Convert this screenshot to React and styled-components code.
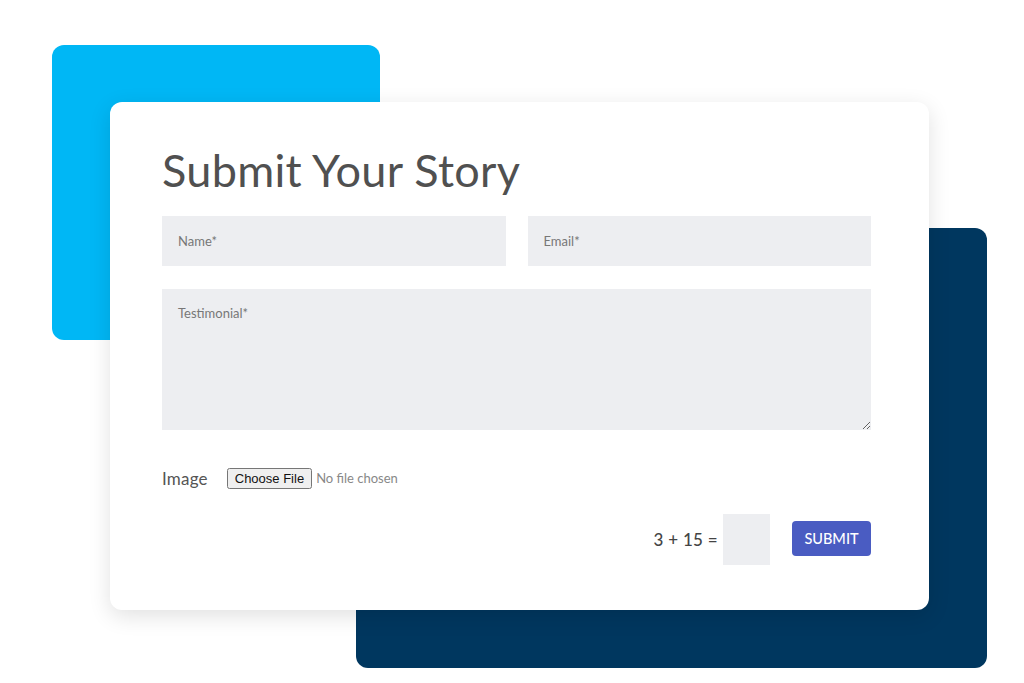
import React from "react";
import styled, { createGlobalStyle } from "styled-components";

const GlobalStyle = createGlobalStyle`
    html, body {
        margin: 0;
        padding: 0;
        background: #ffffff;
        font-family: "Lato", "Noto Sans", sans-serif;
    }
`;

const Stage = styled.div`
    position: relative;
    width: 1024px;
    height: 683px;
    overflow: hidden;
    padding: 102px 0 0 110px;
    box-sizing: border-box;
`;

// decorative back panels sitting behind the card
const Backdrop = styled.div`
    position: absolute;
    border-radius: 12px;
    background: ${(p) => p.$color};
    left: ${(p) => p.$x}px;
    top: ${(p) => p.$y}px;
    width: ${(p) => p.$w}px;
    height: ${(p) => p.$h}px;
`;

const Card = styled.form`
    position: relative;
    z-index: 1;
    width: 819px;
    height: 508px;
    box-sizing: border-box;
    background: #ffffff;
    border-radius: 12px;
    box-shadow: 0 6px 22px rgba(0, 0, 0, 0.12);
    padding: 38px 58px 0 52px;
    display: flex;
    flex-direction: column;
`;

const Title = styled.h1`
    margin: 0;
    font-family: "Lato", "Noto Sans", sans-serif;
    font-weight: 400;
    font-size: 45px;
    line-height: 60px;
    color: #505050;
    letter-spacing: 0.3px;
`;

const Row = styled.div`
    display: grid;
    grid-template-columns: 1fr 1fr;
    gap: 22px;
    margin-top: 16px;
`;

const Field = styled.input`
    height: 50px;
    border: none;
    outline: none;
    background: #edeef1;
    padding: 0 16px;
    box-sizing: border-box;
    font-family: "Lato", "Noto Sans", sans-serif;
    font-size: 13px;
    color: #444;
    &::placeholder {
        color: #777;
    }
`;

const TextArea = styled.textarea`
    margin-top: 23px;
    height: 141px;
    border: none;
    outline: none;
    background: #edeef1;
    padding: 16px;
    box-sizing: border-box;
    font-family: "Lato", "Noto Sans", sans-serif;
    font-size: 13px;
    color: #444;
    &::placeholder {
        color: #777;
    }
`;

const FileRow = styled.div`
    display: flex;
    align-items: center;
    gap: 19px;
    margin-top: 37px;
    height: 22px;
`;

const Label = styled.label`
    font-size: 17px;
    color: #555;
    letter-spacing: 0.2px;
`;

const FileInput = styled.input`
    font-family: "Lato", "Noto Sans", sans-serif;
    font-size: 13px;
    color: #888;
    &::file-selector-button {
        font-family: "Liberation Sans", Arial, sans-serif;
        font-size: 13px;
        color: #111;
        padding: 1px 6px;
        margin-right: 4px;
    }
`;

const SubmitRow = styled.div`
    display: flex;
    justify-content: flex-end;
    align-items: center;
    margin-top: 25px;
`;

const Captcha = styled.span`
    font-size: 17px;
    font-weight: 500;
    color: #444;
    margin-right: 5px;
    letter-spacing: 0.3px;
`;

const CaptchaBox = styled.input`
    width: 47px;
    height: 51px;
    border: none;
    outline: none;
    background: #edeef1;
    box-sizing: border-box;
    margin-right: 22px;
`;

const SubmitButton = styled.button`
    width: 79px;
    height: 35px;
    margin-top: -2px;
    border: none;
    border-radius: 4px;
    background: #4a5cc2;
    color: #fff;
    font-family: "Lato", "Noto Sans", sans-serif;
    font-size: 14.5px;
    font-weight: 500;
    text-transform: uppercase;
    cursor: pointer;
`;

export default function App() {
    return (
        <>
            <GlobalStyle />
            <Stage>
                <Backdrop $color="#00b7f5" $x={52} $y={45} $w={328} $h={295} />
                <Backdrop $color="#00375f" $x={356} $y={228} $w={631} $h={440} />
                <Card onSubmit={(e) => e.preventDefault()}>
                    <Title>Submit Your Story</Title>
                    <Row>
                        <Field placeholder="Name*" />
                        <Field placeholder="Email*" />
                    </Row>
                    <TextArea placeholder="Testimonial*" />
                    <FileRow>
                        <Label>Image</Label>
                        <FileInput type="file" />
                    </FileRow>
                    <SubmitRow>
                        <Captcha>3 + 15 =</Captcha>
                        <CaptchaBox />
                        <SubmitButton type="submit">Submit</SubmitButton>
                    </SubmitRow>
                </Card>
            </Stage>
        </>
    );
}
